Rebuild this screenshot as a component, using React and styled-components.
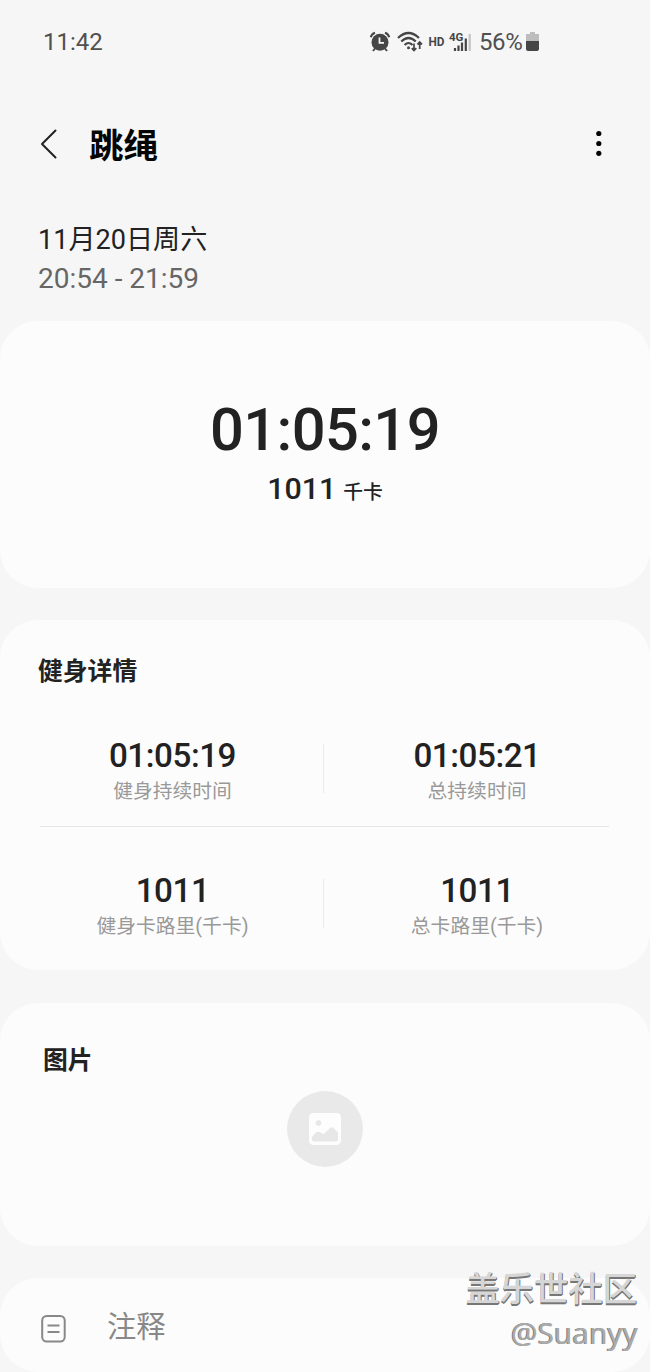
import React from 'react';
import styled, { createGlobalStyle } from 'styled-components';

const GlobalStyle = createGlobalStyle`
  * { box-sizing: border-box; }
  body {
    margin: 0;
    background: #f6f6f6;
    font-family: Roboto, "Noto Sans CJK SC", sans-serif;
    color: #222;
  }
`;

const Screen = styled.main`
  position: relative;
  width: 650px;
  height: 1372px;
  overflow: hidden;
  display: flex;
  flex-direction: column;
  background: #f6f6f6;
`;

const StatusBar = styled.header`
  height: 84px;
  padding: 0 109px 0 43px;
  display: flex;
  align-items: center;
  justify-content: space-between;
  color: #505050;
  font-size: 24px;
  line-height: 28px;
`;

const StatusIcons = styled.div`
  display: flex;
  align-items: center;
`;

const StatusGlyphs = styled.svg`
  display: block;
  width: 104px;
  height: 28px;
  margin-right: 7px;
`;

const Percent = styled.span`
  font-size: 24px;
  letter-spacing: -0.4px;
  width: 47px;
  white-space: nowrap;
`;

const Battery = styled.svg`
  display: block;
  width: 15px;
  height: 28px;
`;

const TitleBar = styled.nav`
  height: 120px;
  padding: 0 38px;
  display: flex;
  align-items: center;
`;

const BackIcon = styled.svg`
  width: 20px;
  height: 32px;
  margin-right: 31px;
`;

const Title = styled.h1`
  margin: 4px 0 0;
  flex: 1;
  font-size: 34.5px;
  line-height: 44px;
  font-weight: 700;
  color: #050505;
`;

const MoreIcon = styled.svg`
  width: 28px;
  height: 32px;
`;

const DateBlock = styled.section`
  height: 117px;
  padding: 17px 38px 0;
`;

const DateLine = styled.div`
  font-size: 27.1px;
  line-height: 38px;
  color: #222;
`;

const TimeLine = styled.div`
  font-size: 28px;
  line-height: 40px;
  color: #666;
`;

const Card = styled.section`
  flex: none;
  height: ${(p) => p.$height}px;
  margin-bottom: ${(p) => p.$gap || 0}px;
  border-radius: 38px;
  background: #fcfcfc;
`;

const Summary = styled(Card)`
  display: flex;
  flex-direction: column;
  align-items: center;
  padding-top: 74px;
`;

const Duration = styled.div`
  font-size: 59.6px;
  line-height: 70px;
  font-weight: 500;
  letter-spacing: -0.6px;
`;

const Calories = styled.div`
  display: flex;
  align-items: baseline;
  gap: 7px;
  margin-top: 4px;
  font-size: 30.4px;
  line-height: 40px;
  font-weight: 500;
`;

const Unit = styled.span`
  font-size: 19.8px;
`;

const CardTitle = styled.h2`
  margin: 0;
  padding: ${(p) => p.$pad};
  font-size: 24.8px;
  line-height: 36px;
  font-weight: 700;
`;

const StatRow = styled.div`
  display: grid;
  grid-template-columns: 303px 1px 304px;
  align-items: start;
  margin: 0 22px 0 20px;
  height: ${(p) => p.$height}px;
`;

const Stat = styled.div`
  display: flex;
  flex-direction: column;
  align-items: center;
  margin-left: 2px;
`;

const StatValue = styled.div`
  padding-top: 1px;
  font-size: 33.2px;
  line-height: 40px;
  font-weight: 500;
  letter-spacing: -0.45px;
`;

const StatLabel = styled.div`
  margin-top: 1px;
  font-size: 19.8px;
  line-height: 30px;
  color: #999;
`;

const VerticalRule = styled.div`
  height: 49px;
  margin-top: 9px;
  background: #ebebeb;
`;

const HorizontalRule = styled.div`
  height: 1px;
  margin: 0 41px 43px 40px;
  background: #e6e6e6;
`;

const PictureButton = styled.div`
  display: flex;
  align-items: center;
  justify-content: center;
  width: 76px;
  height: 76px;
  margin: 12px auto 0;
  border-radius: 50%;
  background: #e9e9e9;
`;

const NoteCard = styled(Card)`
  display: flex;
  align-items: center;
  padding: 5px 40px 0;
`;

const NoteIcon = styled.svg`
  width: 27px;
  height: 30px;
  margin-top: 3px;
`;

const NoteText = styled.span`
  margin: -1px 0 0 40px;
  font-size: 29.3px;
  line-height: 40px;
  color: #888;
`;

const Watermark = styled.div`
  position: absolute;
  right: 13px;
  bottom: 17px;
  display: flex;
  flex-direction: column;
  align-items: flex-end;
`;

const Community = styled.div`
  font-family: "Noto Sans CJK SC", sans-serif;
  font-size: 34.3px;
  line-height: 50px;
  font-weight: 500;
  color: #d6d6d6;
  text-shadow: 1px 1px 0 #777, 0 2px 0 #777;
`;

const Author = styled.div`
  font-family: "Noto Sans", sans-serif;
  font-size: 29.8px;
  line-height: 44px;
  margin-right: -1px;
  color: #aaa;
  text-shadow: -1px 0 0 #808080;
`;

function Metric({ value, label }) {
  return (
    <Stat>
      <StatValue>{value}</StatValue>
      <StatLabel>{label}</StatLabel>
    </Stat>
  );
}

export default function App() {
  return (
    <>
      <GlobalStyle />
      <Screen>
        <StatusBar>
          <span>11:42</span>
          <StatusIcons>
            <StatusGlyphs viewBox="368 28 104 28" fill="none" stroke="#464646">
              <circle cx="380" cy="42.300" r="8.500" fill="#464646" stroke="none" />
              <path d="M370.800 37.200Q371.500 34 375 32.800M389.200 37.200Q388.500 34 385 32.800M375 48.500l-2 2.500M385 48.500l2 2.500" strokeWidth="2" />
              <path d="M379.500 37.500v5.300h4.500" stroke="#f6f6f6" strokeWidth="1.800" />
              <path d="M398 38Q408.500 28 419 38M401.300 41.500Q408.500 34.500 415.800 41.500M404.600 45Q408.500 41 412.500 45" strokeWidth="2.200" />
              <circle cx="408.500" cy="47.800" r="1.500" fill="#464646" stroke="none" />
              <path d="M414 43.500v7M411.700 48.200l2.300 2.300 2.300-2.300M419.700 49v-7M417.400 44.300l2.300-2.300 2.300 2.300" strokeWidth="1.700" />
              <text x="428.500" y="45.500" fontFamily="Roboto, sans-serif" fontSize="12.500" fontWeight="700" fill="#464646" stroke="none" textLength="16" lengthAdjust="spacingAndGlyphs">HD</text>
              <text x="449" y="41" fontFamily="Roboto, sans-serif" fontSize="11.500" fontWeight="700" fill="#464646" stroke="none">4G</text>
              <path d="M455 48v3M458.500 45.500v5.500M462 42.500v8.500M465.800 38.500v12.500" strokeWidth="2.200" />
              <path d="M469.700 34v17" stroke="#c4c4c4" strokeWidth="2.200" />
            </StatusGlyphs>
            <Percent>56%</Percent>
            <Battery viewBox="526 28 15 28">
              <path d="M530 32h5v2h4v8h-13v-8h4z" fill="#bdbdbd" />
              <path d="M526 41h13v8q0 2-2 2h-9q-2 0-2-2z" fill="#464646" />
            </Battery>
          </StatusIcons>
        </StatusBar>

        <TitleBar>
          <BackIcon viewBox="0 0 20 32" fill="none" stroke="#222" strokeWidth="2">
            <path d="M17.500 2.500 4 16 17.500 29.500" strokeLinecap="round" strokeLinejoin="round" />
          </BackIcon>
          <Title>跳绳</Title>
          <MoreIcon viewBox="0 0 28 32" fill="#050505">
            <circle cx="14.800" cy="5.500" r="2.600" />
            <circle cx="14.800" cy="15.500" r="2.600" />
            <circle cx="14.800" cy="25.300" r="2.600" />
          </MoreIcon>
        </TitleBar>

        <DateBlock>
          <DateLine>11月20日周六</DateLine>
          <TimeLine>20:54 - 21:59</TimeLine>
        </DateBlock>

        <Summary $height={267} $gap={32}>
          <Duration>01:05:19</Duration>
          <Calories>1011<Unit>千卡</Unit></Calories>
        </Summary>

        <Card $height={350} $gap={33}>
          <CardTitle $pad="34px 38px 45px">健身详情</CardTitle>
          <StatRow $height={91}>
            <Metric value="01:05:19" label="健身持续时间" />
            <VerticalRule />
            <Metric value="01:05:21" label="总持续时间" />
          </StatRow>
          <HorizontalRule />
          <StatRow $height={90}>
            <Metric value="1011" label="健身卡路里(千卡)" />
            <VerticalRule />
            <Metric value="1011" label="总卡路里(千卡)" />
          </StatRow>
        </Card>

        <Card $height={243} $gap={32}>
          <CardTitle $pad="40px 43px 0">图片</CardTitle>
          <PictureButton>
            <svg width="34" height="34" viewBox="0 0 34 34">
              <rect x="1" y="1" width="32" height="32" rx="4.500" fill="#fdfdfd" />
              <circle cx="10.500" cy="11" r="2.800" fill="#e7e7e7" />
              <path d="M4 25.500Q4 24.500 8 20.500Q11 18.500 14.500 22Q16 22.500 18 20L22.500 15.500Q24 14.500 26 16.500L30 20.500V27Q30 29.500 27.500 29.500H6Q4 29.500 4 27.500Z" fill="#e7e7e7" />
            </svg>
          </PictureButton>
        </Card>

        <NoteCard $height={94}>
          <NoteIcon viewBox="0 0 27 30" fill="none" stroke="#888" strokeWidth="2">
            <rect x="2.200" y="2" width="22.500" height="25.500" rx="4.500" />
            <path d="M7.500 11.500h12M7.500 18h12" />
          </NoteIcon>
          <NoteText>注释</NoteText>
        </NoteCard>

        <Watermark>
          <Community>盖乐世社区</Community>
          <Author>@Suanyy</Author>
        </Watermark>
      </Screen>
    </>
  );
}
